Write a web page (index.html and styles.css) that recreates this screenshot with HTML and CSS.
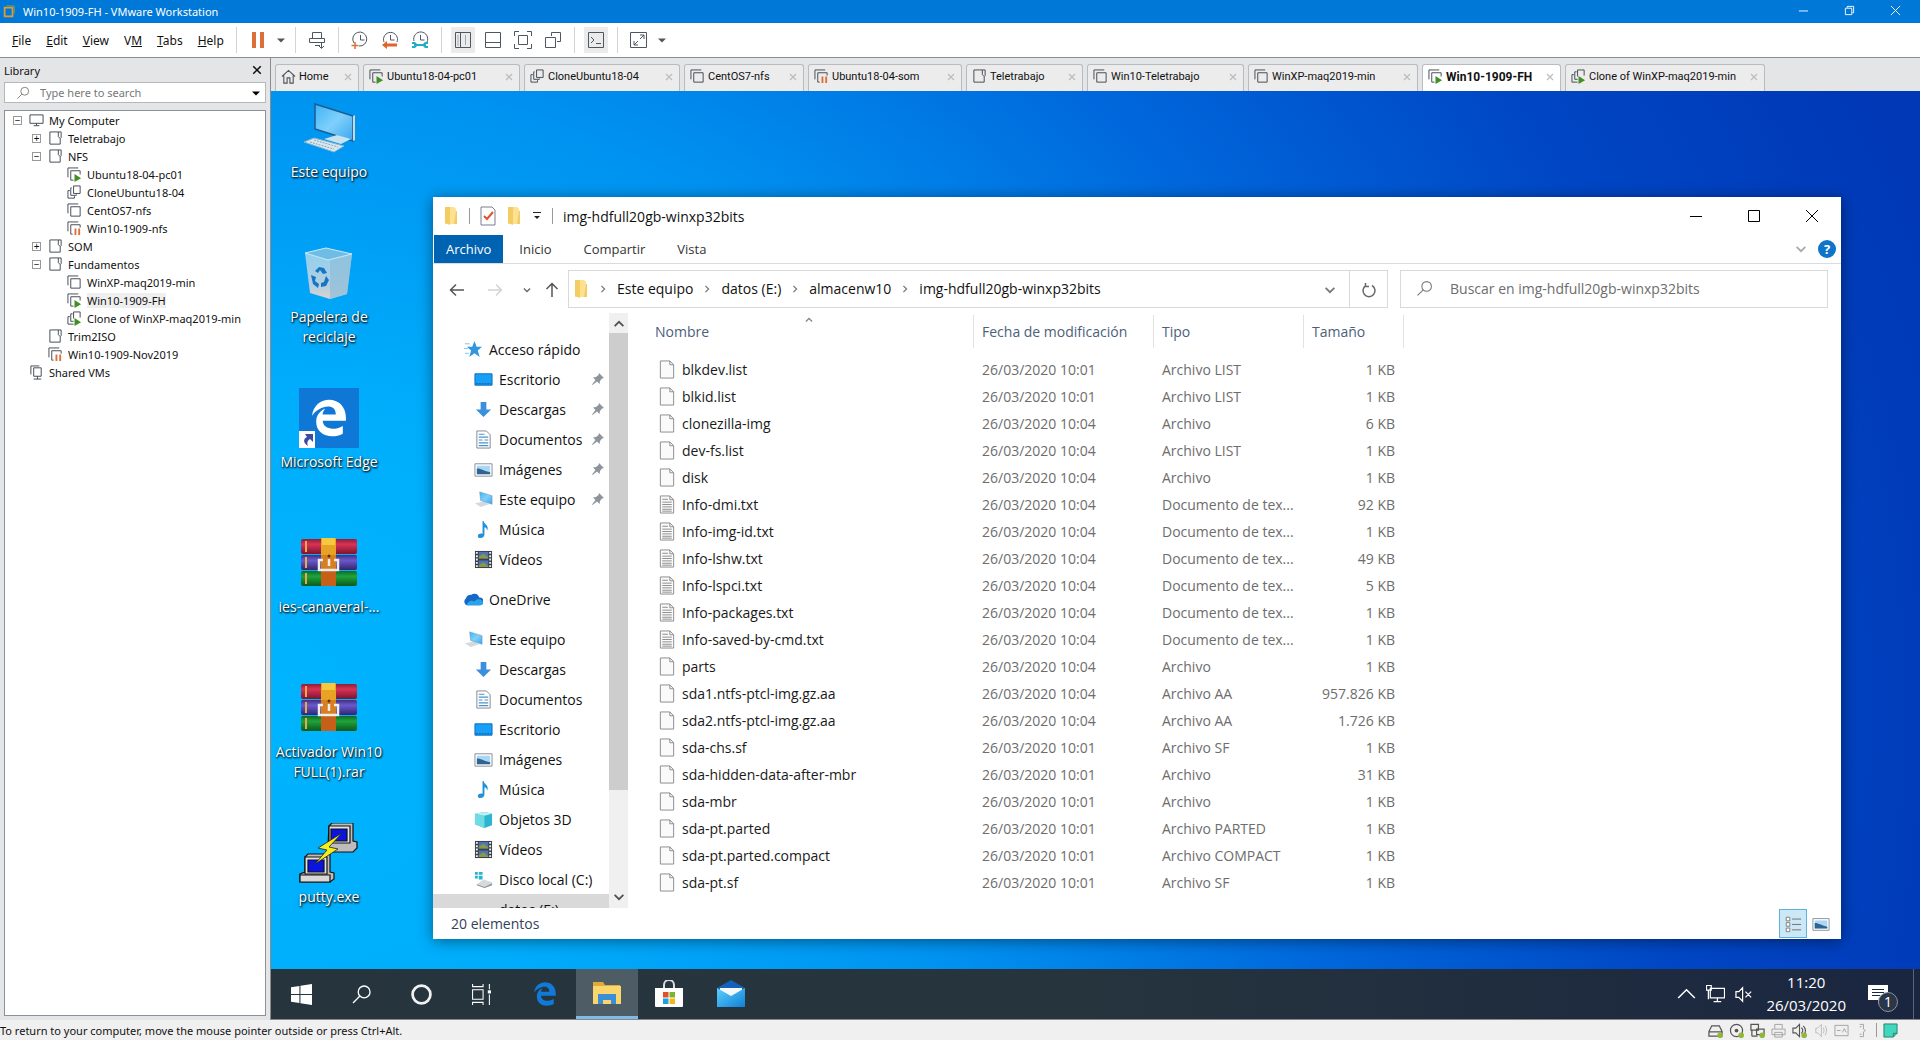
FILE: index.html
```html
<!DOCTYPE html>
<html lang="es">
<head>
<meta charset="UTF-8">
<meta name="viewport" content="width=device-width, initial-scale=1.0">
<title>Win10-1909-FH - VMware Workstation</title>
<link rel="stylesheet" href="styles.css">
</head>
<body>

<!-- Icon library -->
<svg class="defs" aria-hidden="true">
    <defs>
        <linearGradient id="g-screen" x1="0" y1="0" x2="1" y2="1"><stop offset="0" stop-color="#3db4f5"/><stop offset=".5" stop-color="#7fd0fb"/><stop offset="1" stop-color="#3aa6f0"/></linearGradient>
        <linearGradient id="g-bin" x1="0" y1="0" x2="0" y2="1"><stop offset="0" stop-color="#8fd0f0"/><stop offset=".7" stop-color="#b5cfdf"/><stop offset="1" stop-color="#d9d3d0"/></linearGradient>
        <linearGradient id="g-red" x1="0" y1="0" x2="0" y2="1"><stop offset="0" stop-color="#8d1e38"/><stop offset=".35" stop-color="#d93355"/><stop offset="1" stop-color="#7c1430"/></linearGradient>
        <linearGradient id="g-blue" x1="0" y1="0" x2="0" y2="1"><stop offset="0" stop-color="#40307f"/><stop offset=".35" stop-color="#6a5acd"/><stop offset="1" stop-color="#33246e"/></linearGradient>
        <linearGradient id="g-green" x1="0" y1="0" x2="0" y2="1"><stop offset="0" stop-color="#0c6a26"/><stop offset=".35" stop-color="#22a33c"/><stop offset="1" stop-color="#085a1c"/></linearGradient>
        <linearGradient id="g-mail" x1="0" y1="0" x2="1" y2="1"><stop offset="0" stop-color="#5fd0fa"/><stop offset="1" stop-color="#0f80d8"/></linearGradient>
    </defs>
    <symbol id="i-vm" viewBox="0 0 16 16"><path d="M1 11V1h11M4 4h10v10H4z" fill="none" stroke="#3f4650"/></symbol>
    <symbol id="i-vm-run" viewBox="0 0 16 16"><path d="M1 11V1h11M7 14H4V4h10v4" fill="none" stroke="#3f4650"/><path d="M8 7.500l7 4.500-7 4z" fill="#3e9122"/></symbol>
    <symbol id="i-vm-pause" viewBox="0 0 16 16"><path d="M1 11V1h11M6 14H4V4h10v3" fill="none" stroke="#3f4650"/><path d="M8 8h2v7H8zM12 8h2v7h-2z" fill="#dd6f3a"/></symbol>
    <symbol id="i-clone" viewBox="0 0 16 16"><path d="M3 6H1v8h7v-2M5 3H4v8h6v-1M7 1h7v8H7z" fill="none" stroke="#3f4650"/></symbol>
    <symbol id="i-clone-run" viewBox="0 0 16 16"><path d="M3 6H1v8h6M6 3H4v8h3M14 7V1H7v7" fill="none" stroke="#3f4650"/><path d="M8 7.500l7 4.500-7 4z" fill="#3e9122"/></symbol>
    <symbol id="i-folder-vm" viewBox="0 0 16 16"><path d="M11 1H2v13h11V8M11 1h3v6l-1 1-2-2z" fill="none" stroke="#3f4650"/></symbol>
    <symbol id="i-monitor" viewBox="0 0 16 16"><path d="M1 2h14v9H1zM5 13.500h6M8 11v2" fill="none" stroke="#3f4650"/></symbol>
    <symbol id="i-shared" viewBox="0 0 16 16"><path d="M2 10V1h9M5 3h8v9H5zM5 15h8M9 12v3" fill="none" stroke="#3f4650"/></symbol>
    <symbol id="i-home" viewBox="0 0 16 16"><path d="M1 8l7-6.500L15 8M3 7v8h3.500V9.500h3V15H13V7" fill="none" stroke="#4f5660" stroke-width="1.200"/></symbol>
    <symbol id="i-search" viewBox="0 0 16 16"><circle cx="10" cy="6" r="4.500" fill="none" stroke="currentColor"/><path d="M6.800 9.200L1.500 14.500" stroke="currentColor"/></symbol>
    <symbol id="i-close" viewBox="0 0 16 16"><path d="M2 2l12 12M14 2L2 14" fill="none" stroke="currentColor" stroke-width="2.500"/></symbol>
    <symbol id="i-chev" viewBox="0 0 16 16"><path d="M3 5.500l5 5 5-5" fill="none" stroke="currentColor" stroke-width="2"/></symbol>
    <symbol id="i-caret" viewBox="0 0 10 10"><path d="M0 3h10L5 8z" fill="currentColor"/></symbol>
    <symbol id="i-folder" viewBox="0 0 16 20"><path d="M2 1h9l2 2v15H2z" fill="#fbe190"/><path d="M2 1h5v18l-5-2z" fill="#f3cc63"/><path d="M13 5h1v13h-3z" fill="#f3cc63"/></symbol>
    <symbol id="i-file" viewBox="0 0 16 20"><path d="M1 1h10l4 4v14H1z" fill="#fafafa" stroke="#8a8a8a"/><path d="M11 1v4h4" fill="none" stroke="#8a8a8a"/></symbol>
    <symbol id="i-text" viewBox="0 0 16 20"><path d="M1 1h10l4 4v14H1z" fill="#fafafa" stroke="#8a8a8a"/><path d="M11 1v4h4M3 4.500h6M3 7.500h10M3 10h10M3 12.500h10M3 15h10M3 17h10" fill="none" stroke="#8a8a8a"/></symbol>
    <symbol id="i-star" viewBox="0 0 20 20"><path d="M11 1l2.300 6H19l-4.500 4 2 7-5.500-4-5.500 4 2-7L3 7h5.700z" fill="#3296dc"/><path d="M1 4h5M0 9h4M1 14h4" stroke="#7cc0ee"/></symbol>
    <symbol id="i-desk" viewBox="0 0 20 20"><path d="M1 4h18v12H1z" fill="#18a0f8" stroke="#0a6ab8"/><path d="M2 14.500h16" stroke="#0a5ca0" stroke-dasharray="2 1"/></symbol>
    <symbol id="i-down" viewBox="0 0 20 20"><path d="M7 2h6v8h5l-8 8-8-8h5z" fill="#3c8fdd"/></symbol>
    <symbol id="i-doc" viewBox="0 0 20 20"><path d="M3 1h10l4 4v14H3z" fill="#fff" stroke="#808790"/><path d="M5 4.500h6M5 7.500h10M5 10.500h4M11 10.500h4M5 13.500h10M5 16.500h10" stroke="#4c93cc" stroke-width="1.200"/></symbol>
    <symbol id="i-img" viewBox="0 0 20 20"><path d="M1 4h18v13H1z" fill="#fff" stroke="#868c94"/><path d="M3 6h14v9H3z" fill="#a9d7f6"/><path d="M3 9c5 0 8 3 14 4v2H3z" fill="#2e648f"/></symbol>
    <symbol id="i-pc" viewBox="0 0 20 20"><path d="M1 14l9-2 6 3-9 3z" fill="#d3d9dd"/><path d="M6 2l13 4v9L7 11z" fill="url(#g-screen)" stroke="#6c98b8" stroke-width=".6"/></symbol>
    <symbol id="i-music" viewBox="0 0 20 20"><path d="M10 1c1 4 6 4 4 10-1-3-2-3-3-3v7c0 5-7 5-7 2 0-2.500 3-3.500 5-2.500V1z" fill="#2390da"/></symbol>
    <symbol id="i-video" viewBox="0 0 20 20"><path d="M1 1h18v18H1z" fill="#3c3c44"/><path d="M5 2h10v7H5z" fill="#4a74c0"/><path d="M5 11h10v7H5z" fill="#4a74c0"/><path d="M5 7l5-3 5 4v1H5zM5 16l5-3 5 4v1H5z" fill="#8a9a3c"/><path d="M3 2v17M17 2v17" stroke="#eee" stroke-width="2" stroke-dasharray="2 1.500"/></symbol>
    <symbol id="i-cloud" viewBox="0 0 20 20"><path d="M3 16a4 4 0 0 1-1-7 5 5 0 0 1 6-4 5 5 0 0 1 8 3 4 4 0 0 1 1 8z" fill="#1568c4"/><path d="M3 16c0-4 5-6 8-4 3-4 9-2 9 1 0 2-1 3-3 3z" fill="#2aa3ea"/></symbol>
    <symbol id="i-cube" viewBox="0 0 20 20"><path d="M1 4l10-2 8 2v12l-8 3-10-4z" fill="#2bb5cf"/><path d="M1 4l10 2v13L1 15z" fill="#6fdbe3"/><path d="M1 4l10-2 8 2-8 2z" fill="#b8f2f4"/></symbol>
    <symbol id="i-disk" viewBox="0 0 20 20"><path d="M3 15l7-5 9 3v3l-8 3-8-3z" fill="#d7dadd"/><path d="M3 15l8 3 8-4v2l-8 3-8-3z" fill="#8d969c"/><path d="M1 2h3v3H1zM5 2h4v3H5zM1 6h3v3H1zM5 6h4v4H5z" fill="#27b5cc"/></symbol>
    <symbol id="i-pin" viewBox="0 0 14 14"><path d="M8 1l5 5-2 .5-2 2.500-.5 3L6 9.500 1.500 13 1 12.500 4.500 8 2 5.500 5 5l2.500-2z" fill="#8d949b"/></symbol>
    <symbol id="i-edge" viewBox="0 0 24 24"><path d="M2.740 10.810C3.830-1.360 22.500-1.360 21.200 13.560H8.610c0 4.290 5.810 5.650 10.930 2.750v4.220C13.250 23.880 5 21.430 5 14.090c0-5.510 4.970-7.280 4.970-7.280S8.580 8.580 8.540 10.050h7.160c0-7.120-9.800-4.480-12.960.76z" fill="currentColor"/></symbol>
    <symbol id="i-rar" viewBox="0 0 60 60"><rect x="2" y="6" width="56" height="15" rx="2" fill="url(#g-red)"/><rect x="2" y="22" width="56" height="15" rx="2" fill="url(#g-blue)"/><rect x="2" y="38" width="56" height="15" rx="2" fill="url(#g-green)"/><path d="M7 8v11M7 24v11M7 40v11" stroke="#e9a94a" stroke-width="2"/><path d="M22 5h15v17H22z" fill="#e8a325"/><path d="M23 5h13v7H23z" fill="#f6c83f"/><path d="M22 22h15v16H22z" fill="#d8801f"/><path d="M22 38h15v15H22z" fill="#c65f18"/><circle cx="30" cy="23" r="1.500" fill="#5d3110"/><path d="M24 27h-4v10h19V27h-4M30 26v7" fill="none" stroke="#eee" stroke-width="2.500"/></symbol>
</svg>

<header class="titlebar">
    <svg class="app-logo" viewBox="0 0 16 16"><path d="M3 3h9v10H3z" fill="none" stroke="#e69a2e" stroke-width="2"/><path d="M5 1h9v9" fill="none" stroke="#8aa04a"/></svg>
    <h1>Win10-1909-FH - VMware Workstation</h1>
    <div class="window-buttons">
        <button aria-label="Minimize"><svg viewBox="0 0 12 12"><path d="M1 6.500h10" stroke="#fff"/></svg></button>
        <button aria-label="Restore"><svg viewBox="0 0 12 12"><path d="M1.500 3.500h7v7h-7zM3.500 3V1.500h7v7H9" fill="none" stroke="#fff"/></svg></button>
        <button aria-label="Close"><svg viewBox="0 0 12 12"><path d="M1 1l10 10M11 1L1 11" stroke="#fff"/></svg></button>
    </div>
</header>

<nav class="menubar">
    <div class="menus">
        <button><u>F</u>ile</button>
        <button><u>E</u>dit</button>
        <button><u>V</u>iew</button>
        <button>V<u>M</u></button>
        <button><u>T</u>abs</button>
        <button><u>H</u>elp</button>
    </div>
    <div class="tools">
        <button class="tool" aria-label="Suspend"><svg viewBox="0 0 20 20"><path d="M4 2h4v16H4zM12 2h4v16h-4z" fill="#dd6f3a"/></svg></button>
        <button class="tool small" aria-label="Power menu"><svg viewBox="0 0 10 10"><use href="#i-caret"/></svg></button>
    </div>
    <div class="tools">
        <button class="tool" aria-label="Send Ctrl+Alt+Del"><svg viewBox="0 0 20 20"><path d="M5.500 2.500h9v6h-9zM2.500 8.500h15v4h-15zM8 15.500h5M14.500 12v6M12 16l2.500 2.500L17 16" fill="none" stroke="#4f5660"/></svg></button>
    </div>
    <div class="tools">
        <button class="tool" aria-label="Take snapshot"><svg viewBox="0 0 20 20"><path d="M4 13a7 7 0 1 1 5 3M10.500 5v5h4" fill="none" stroke="#4f5660"/><path d="M5 12v7M1.500 15.500h7" stroke="#dd6f3a" stroke-width="1.500"/></svg></button>
        <button class="tool" aria-label="Revert snapshot"><svg viewBox="0 0 20 20"><path d="M4 12a7 7 0 1 1 13 0M10.500 5v5h4" fill="none" stroke="#4f5660"/><path d="M2 15l5-4v2.500h10v3H7V19z" fill="#e2642a"/></svg></button>
        <button class="tool" aria-label="Manage snapshots"><svg viewBox="0 0 20 20"><path d="M4 11a7 7 0 1 1 13 1M10.500 5v5h4" fill="none" stroke="#4f5660"/><path d="M2 12h3l2 2h6l2-2h3v2h-2v2h2v2h-3l-2-2H7l-2 2H2v-2h2v-2H2z" fill="#1fb0c6"/></svg></button>
    </div>
    <div class="tools">
        <button class="tool on" aria-label="Show library"><svg viewBox="0 0 20 20"><path d="M2.500 2.500h15v15h-15zM7.500 3v14" fill="none" stroke="#4f5660"/><path d="M5 5v11M12.500 5v10" fill="none" stroke="#a5a9ae"/></svg></button>
        <button class="tool" aria-label="Thumbnail bar"><svg viewBox="0 0 20 20"><path d="M2.500 2.500h15v15h-15zM3 12.500h14" fill="none" stroke="#4f5660"/></svg></button>
        <button class="tool" aria-label="Full screen"><svg viewBox="0 0 20 20"><path d="M5.500 5.500h9v9h-9zM1.500 6V1.500H6M14 1.500h4.500V6M18.500 14v4.500H14M6 18.500H1.500V14" fill="none" stroke="#4f5660"/></svg></button>
        <button class="tool" aria-label="Unity"><svg viewBox="0 0 20 20"><path d="M8.500 6V2.500h9v9H14M2.500 7.500h10v10h-10z" fill="none" stroke="#4f5660"/></svg></button>
    </div>
    <div class="tools">
        <button class="tool on" aria-label="Console view"><svg viewBox="0 0 20 20"><path d="M2.500 2.500h15v15h-15zM5 7l3 3-3 3M10 13.500h5" fill="none" stroke="#4f5660"/></svg></button>
    </div>
    <div class="tools">
        <button class="tool" aria-label="Stretch guest"><svg viewBox="0 0 20 20"><path d="M1.500 2.500h16v15h-16zM11 9l4-4M11 5h4v4M9 11l-4 4M5 11v4h4" fill="none" stroke="#4f5660"/></svg></button>
        <button class="tool small" aria-label="Stretch menu"><svg viewBox="0 0 10 10"><use href="#i-caret"/></svg></button>
    </div>
</nav>

<div class="workspace">
    <aside class="library">
        <div class="library-head">
            <h2>Library</h2>
            <button aria-label="Close library"><svg viewBox="0 0 16 16"><use href="#i-close"/></svg></button>
        </div>
        <label class="library-search">
            <svg viewBox="0 0 16 16"><use href="#i-search"/></svg>
            <input type="text" placeholder="Type here to search" aria-label="Search library">
            <svg class="caret" viewBox="0 0 10 10"><use href="#i-caret"/></svg>
        </label>
        <ul class="tree">
            <li><button class="toggle" aria-label="Collapse">−</button><svg><use href="#i-monitor"/></svg><span>My Computer</span></li>
            <li class="l1"><button class="toggle" aria-label="Expand">+</button><svg><use href="#i-folder-vm"/></svg><span>Teletrabajo</span></li>
            <li class="l1"><button class="toggle" aria-label="Collapse">−</button><svg><use href="#i-folder-vm"/></svg><span>NFS</span></li>
            <li class="l2 leaf"><svg><use href="#i-vm-run"/></svg><span>Ubuntu18-04-pc01</span></li>
            <li class="l2 leaf"><svg><use href="#i-clone"/></svg><span>CloneUbuntu18-04</span></li>
            <li class="l2 leaf"><svg><use href="#i-vm"/></svg><span>CentOS7-nfs</span></li>
            <li class="l2 leaf"><svg><use href="#i-vm-pause"/></svg><span>Win10-1909-nfs</span></li>
            <li class="l1"><button class="toggle" aria-label="Expand">+</button><svg><use href="#i-folder-vm"/></svg><span>SOM</span></li>
            <li class="l1"><button class="toggle" aria-label="Collapse">−</button><svg><use href="#i-folder-vm"/></svg><span>Fundamentos</span></li>
            <li class="l2 leaf"><svg><use href="#i-vm"/></svg><span>WinXP-maq2019-min</span></li>
            <li class="l2 leaf"><svg><use href="#i-vm-run"/></svg><span class="current">Win10-1909-FH</span></li>
            <li class="l2 leaf"><svg><use href="#i-clone-run"/></svg><span>Clone of WinXP-maq2019-min</span></li>
            <li class="l1 leaf"><svg><use href="#i-folder-vm"/></svg><span>Trim2ISO</span></li>
            <li class="l1 leaf"><svg><use href="#i-vm-pause"/></svg><span>Win10-1909-Nov2019</span></li>
            <li class="leaf"><svg><use href="#i-shared"/></svg><span>Shared VMs</span></li>
        </ul>
    </aside>

    <div class="console">
        <div class="tabs">
            <div class="tab"><svg><use href="#i-home"/></svg><a href="#">Home</a><button aria-label="Close tab"><svg><use href="#i-close"/></svg></button></div>
            <div class="tab"><svg><use href="#i-vm-run"/></svg><a href="#">Ubuntu18-04-pc01</a><button aria-label="Close tab"><svg><use href="#i-close"/></svg></button></div>
            <div class="tab"><svg><use href="#i-clone"/></svg><a href="#">CloneUbuntu18-04</a><button aria-label="Close tab"><svg><use href="#i-close"/></svg></button></div>
            <div class="tab"><svg><use href="#i-vm"/></svg><a href="#">CentOS7-nfs</a><button aria-label="Close tab"><svg><use href="#i-close"/></svg></button></div>
            <div class="tab"><svg><use href="#i-vm-pause"/></svg><a href="#">Ubuntu18-04-som</a><button aria-label="Close tab"><svg><use href="#i-close"/></svg></button></div>
            <div class="tab"><svg><use href="#i-folder-vm"/></svg><a href="#">Teletrabajo</a><button aria-label="Close tab"><svg><use href="#i-close"/></svg></button></div>
            <div class="tab"><svg><use href="#i-vm"/></svg><a href="#">Win10-Teletrabajo</a><button aria-label="Close tab"><svg><use href="#i-close"/></svg></button></div>
            <div class="tab"><svg><use href="#i-vm"/></svg><a href="#">WinXP-maq2019-min</a><button aria-label="Close tab"><svg><use href="#i-close"/></svg></button></div>
            <div class="tab active"><svg><use href="#i-vm-run"/></svg><a href="#">Win10-1909-FH</a><button aria-label="Close tab"><svg><use href="#i-close"/></svg></button></div>
            <div class="tab"><svg><use href="#i-clone-run"/></svg><a href="#">Clone of WinXP-maq2019-min</a><button aria-label="Close tab"><svg><use href="#i-close"/></svg></button></div>
        </div>

        <div class="guest">
            <main class="desktop">
                <div class="shortcuts">
                    <a href="#" class="shortcut">
                        <svg viewBox="0 0 60 60"><path d="M16 6l38 12v25L16 31z" fill="url(#g-screen)" stroke="#1d5c90" stroke-width="1.500"/><path d="M54 18l2-1v25l-2 1z" fill="#c8d8e0"/><path d="M25 41l13-4 14 4-10 5z" fill="#c9e2f2"/><path d="M5 44l10-4 30 8-10 6z" fill="#d9e8f0" stroke="#8fb4ca"/><path d="M11 44l24 7M15 42l24 7" stroke="#8aa6b6" stroke-dasharray="2 1"/></svg>
                        <span>Este equipo</span>
                    </a>
                    <a href="#" class="shortcut">
                        <svg viewBox="0 0 60 60"><path d="M6 10l5 40 20 6 17-5 5-40-24 6z" fill="url(#g-bin)"/><path d="M31 17l22-6-5 40-17 5z" fill="#8fbdd8" opacity=".7"/><path d="M6 10l21-5 26 6-24 6z" fill="#6fbde4" stroke="#cdeaf8"/><path d="M16 28l4-4 5 1 3 5-4 1-3-4-2 3zM27 33l3 4-3 6-5 1v-4l3-1zM12 32l5 2-1 4 4 3-1 4-5-4z" fill="#1576c6"/></svg>
                        <span>Papelera de reciclaje</span>
                    </a>
                    <a href="#" class="shortcut">
                        <svg viewBox="0 0 60 60"><path d="M0 0h60v60H0z" fill="#0f78d7"/><svg x="8" y="7" width="44" height="46" color="#fff"><use href="#i-edge"/></svg><path d="M0 43h16v17H0z" fill="#fff"/><path d="M6 46h8v8l-3-3c-3 2-3 4-2 7-5-3-5-7-1-9z" fill="#3b4da0"/></svg>
                        <span>Microsoft Edge</span>
                    </a>
                    <a href="#" class="shortcut">
                        <svg viewBox="0 0 60 60"><use href="#i-rar"/></svg>
                        <span>ies-canaveral-...</span>
                    </a>
                    <a href="#" class="shortcut">
                        <svg viewBox="0 0 60 60"><use href="#i-rar"/></svg>
                        <span>Activador Win10 FULL(1).rar</span>
                    </a>
                    <a href="#" class="shortcut">
                        <svg viewBox="0 0 60 60"><g stroke="#111" stroke-width="1.200"><path d="M30 3l3-3h21v18l4 1v6l-4 4H29v-6z" fill="#bdbdbd"/><path d="M30 3h21v17H30z" fill="#e2e2e2"/><path d="M32 6h16v12H32z" fill="#0a14e0"/><path d="M6 34l3-3h22v18l4 1v6l-4 3H1v-8l5-2z" fill="#bdbdbd"/><path d="M6 34h22v17H6z" fill="#e2e2e2"/><path d="M9 37h16v12H9z" fill="#0a14e0"/><path d="M1 52h30v7H1z" fill="#d8d8d8"/></g><path d="M43 10L19 25l9 2-12 14 23-15-9-2z" fill="#f6ee1c" stroke="#222" stroke-width=".8"/></svg>
                        <span>putty.exe</span>
                    </a>
                </div>

                <section class="explorer">
                    <div class="ex-title">
                        <svg class="folder"><use href="#i-folder"/></svg>
                        <i class="bar"></i>
                        <svg class="check" viewBox="0 0 16 20"><path d="M1 1h11l3 3v15H1z" fill="#fff" stroke="#7b7f92"/><path d="M4 10l3 3 6-7" fill="none" stroke="#e0532c" stroke-width="2"/></svg>
                        <svg class="folder"><use href="#i-folder"/></svg>
                        <svg class="qa-menu" viewBox="0 0 10 10"><path d="M1 1.500h8" stroke="#222"/><path d="M2 5h6L5 8z" fill="#222"/></svg>
                        <i class="bar"></i>
                        <h2>img-hdfull20gb-winxp32bits</h2>
                        <div class="ex-buttons">
                            <button aria-label="Minimizar"><svg viewBox="0 0 12 12"><path d="M0 6.500h12" stroke="#000"/></svg></button>
                            <button aria-label="Maximizar"><svg viewBox="0 0 12 12"><path d="M.5.500h11v11H.5z" fill="none" stroke="#000"/></svg></button>
                            <button aria-label="Cerrar"><svg viewBox="0 0 12 12"><path d="M0 0l12 12M12 0L0 12" stroke="#000"/></svg></button>
                        </div>
                    </div>
                    <div class="ribbon">
                        <button class="file">Archivo</button>
                        <button>Inicio</button>
                        <button>Compartir</button>
                        <button>Vista</button>
                        <svg viewBox="0 0 16 16"><use href="#i-chev"/></svg>
                        <button class="help" aria-label="Ayuda">?</button>
                    </div>
                    <div class="address-row">
                        <button class="nav-btn" aria-label="Atrás"><svg viewBox="0 0 16 16"><path d="M15 8H1.500M7 2.500L1.500 8 7 13.500" fill="none" stroke="#555" stroke-width="1.500"/></svg></button>
                        <button class="nav-btn" aria-label="Adelante"><svg viewBox="0 0 16 16"><path d="M1 8h13.500M9 2.500L14.500 8 9 13.500" fill="none" stroke="#d4d4d4" stroke-width="1.500"/></svg></button>
                        <button class="nav-btn mini" aria-label="Recientes"><svg viewBox="0 0 16 16"><use href="#i-chev"/></svg></button>
                        <button class="nav-btn mini up" aria-label="Subir"><svg viewBox="0 0 16 16"><path d="M8 15V1.500M2.500 7L8 1.500 13.500 7" fill="none" stroke="#555" stroke-width="1.500"/></svg></button>
                        <div class="crumbs">
                            <svg class="folder"><use href="#i-folder"/></svg>
                            <svg class="sep"><use href="#i-chev"/></svg>
                            <a href="#">Este equipo</a>
                            <svg class="sep"><use href="#i-chev"/></svg>
                            <a href="#">datos (E:)</a>
                            <svg class="sep"><use href="#i-chev"/></svg>
                            <a href="#">almacenw10</a>
                            <svg class="sep"><use href="#i-chev"/></svg>
                            <a href="#">img-hdfull20gb-winxp32bits</a>
                            <button class="drop" aria-label="Historial"><svg viewBox="0 0 16 16"><use href="#i-chev"/></svg></button>
                            <button class="refresh" aria-label="Actualizar"><svg viewBox="0 0 16 16"><path d="M11 3.500A6 6 0 1 1 5 3.500M4.500 1v3.500H8" fill="none" stroke="#666" stroke-width="1.500"/></svg></button>
                        </div>
                        <label class="ex-search">
                            <svg viewBox="0 0 16 16"><use href="#i-search"/></svg>
                            <input type="text" placeholder="Buscar en img-hdfull20gb-winxp32bits" aria-label="Buscar">
                        </label>
                    </div>
                    <div class="ex-body">
                        <nav class="places">
                            <a href="#" class="root"><svg><use href="#i-star"/></svg>Acceso rápido</a>
                            <a href="#"><svg><use href="#i-desk"/></svg>Escritorio<svg class="pin"><use href="#i-pin"/></svg></a>
                            <a href="#"><svg><use href="#i-down"/></svg>Descargas<svg class="pin"><use href="#i-pin"/></svg></a>
                            <a href="#"><svg><use href="#i-doc"/></svg>Documentos<svg class="pin"><use href="#i-pin"/></svg></a>
                            <a href="#"><svg><use href="#i-img"/></svg>Imágenes<svg class="pin"><use href="#i-pin"/></svg></a>
                            <a href="#"><svg><use href="#i-pc"/></svg>Este equipo<svg class="pin"><use href="#i-pin"/></svg></a>
                            <a href="#"><svg><use href="#i-music"/></svg>Música</a>
                            <a href="#"><svg><use href="#i-video"/></svg>Vídeos</a>
                            <a href="#" class="root gap"><svg><use href="#i-cloud"/></svg>OneDrive</a>
                            <a href="#" class="root gap"><svg><use href="#i-pc"/></svg>Este equipo</a>
                            <a href="#"><svg><use href="#i-down"/></svg>Descargas</a>
                            <a href="#"><svg><use href="#i-doc"/></svg>Documentos</a>
                            <a href="#"><svg><use href="#i-desk"/></svg>Escritorio</a>
                            <a href="#"><svg><use href="#i-img"/></svg>Imágenes</a>
                            <a href="#"><svg><use href="#i-music"/></svg>Música</a>
                            <a href="#"><svg><use href="#i-cube"/></svg>Objetos 3D</a>
                            <a href="#"><svg><use href="#i-video"/></svg>Vídeos</a>
                            <a href="#"><svg><use href="#i-disk"/></svg>Disco local (C:)</a>
                            <a href="#" class="selected"><svg></svg>datos (E:)</a>
                        </nav>
                        <div class="scrollbar">
                            <svg class="flip" viewBox="0 0 16 16"><use href="#i-chev"/></svg>
                            <div class="track"><div class="thumb"></div></div>
                            <svg viewBox="0 0 16 16"><use href="#i-chev"/></svg>
                        </div>
                        <div class="files">
                            <table>
                                <thead>
                                    <tr><th class="c-name"><div>Nombre<svg class="sort" viewBox="0 0 16 16"><use href="#i-chev"/></svg></div></th><th class="c-date"><div>Fecha de modificación</div></th><th class="c-type"><div>Tipo</div></th><th class="c-size"><div>Tamaño</div></th></tr>
                                </thead>
                                <tbody>
                                    <tr><td><svg><use href="#i-file"/></svg>blkdev.list</td><td>26/03/2020 10:01</td><td>Archivo LIST</td><td>1 KB</td></tr>
                                    <tr><td><svg><use href="#i-file"/></svg>blkid.list</td><td>26/03/2020 10:01</td><td>Archivo LIST</td><td>1 KB</td></tr>
                                    <tr><td><svg><use href="#i-file"/></svg>clonezilla-img</td><td>26/03/2020 10:04</td><td>Archivo</td><td>6 KB</td></tr>
                                    <tr><td><svg><use href="#i-file"/></svg>dev-fs.list</td><td>26/03/2020 10:04</td><td>Archivo LIST</td><td>1 KB</td></tr>
                                    <tr><td><svg><use href="#i-file"/></svg>disk</td><td>26/03/2020 10:04</td><td>Archivo</td><td>1 KB</td></tr>
                                    <tr><td><svg><use href="#i-text"/></svg>Info-dmi.txt</td><td>26/03/2020 10:04</td><td>Documento de tex...</td><td>92 KB</td></tr>
                                    <tr><td><svg><use href="#i-text"/></svg>Info-img-id.txt</td><td>26/03/2020 10:04</td><td>Documento de tex...</td><td>1 KB</td></tr>
                                    <tr><td><svg><use href="#i-text"/></svg>Info-lshw.txt</td><td>26/03/2020 10:04</td><td>Documento de tex...</td><td>49 KB</td></tr>
                                    <tr><td><svg><use href="#i-text"/></svg>Info-lspci.txt</td><td>26/03/2020 10:04</td><td>Documento de tex...</td><td>5 KB</td></tr>
                                    <tr><td><svg><use href="#i-text"/></svg>Info-packages.txt</td><td>26/03/2020 10:04</td><td>Documento de tex...</td><td>1 KB</td></tr>
                                    <tr><td><svg><use href="#i-text"/></svg>Info-saved-by-cmd.txt</td><td>26/03/2020 10:04</td><td>Documento de tex...</td><td>1 KB</td></tr>
                                    <tr><td><svg><use href="#i-file"/></svg>parts</td><td>26/03/2020 10:04</td><td>Archivo</td><td>1 KB</td></tr>
                                    <tr><td><svg><use href="#i-file"/></svg>sda1.ntfs-ptcl-img.gz.aa</td><td>26/03/2020 10:04</td><td>Archivo AA</td><td>957.826 KB</td></tr>
                                    <tr><td><svg><use href="#i-file"/></svg>sda2.ntfs-ptcl-img.gz.aa</td><td>26/03/2020 10:04</td><td>Archivo AA</td><td>1.726 KB</td></tr>
                                    <tr><td><svg><use href="#i-file"/></svg>sda-chs.sf</td><td>26/03/2020 10:01</td><td>Archivo SF</td><td>1 KB</td></tr>
                                    <tr><td><svg><use href="#i-file"/></svg>sda-hidden-data-after-mbr</td><td>26/03/2020 10:01</td><td>Archivo</td><td>31 KB</td></tr>
                                    <tr><td><svg><use href="#i-file"/></svg>sda-mbr</td><td>26/03/2020 10:01</td><td>Archivo</td><td>1 KB</td></tr>
                                    <tr><td><svg><use href="#i-file"/></svg>sda-pt.parted</td><td>26/03/2020 10:01</td><td>Archivo PARTED</td><td>1 KB</td></tr>
                                    <tr><td><svg><use href="#i-file"/></svg>sda-pt.parted.compact</td><td>26/03/2020 10:01</td><td>Archivo COMPACT</td><td>1 KB</td></tr>
                                    <tr><td><svg><use href="#i-file"/></svg>sda-pt.sf</td><td>26/03/2020 10:01</td><td>Archivo SF</td><td>1 KB</td></tr>
                                </tbody>
                            </table>
                        </div>
                    </div>
                    <div class="ex-status">
                        <span>20 elementos</span>
                        <button class="view on" aria-label="Detalles"><svg viewBox="0 0 20 20"><path d="M2.500 2.500h4v4h-4zM2.500 8.500h4v4h-4zM2.500 14.500h4v4h-4z" fill="#fff" stroke="#777"/><path d="M9 4.500h10M9 10.500h10M9 16.500h10" stroke="#666"/></svg></button>
                        <button class="view" aria-label="Iconos grandes"><svg viewBox="0 0 20 20"><use href="#i-img"/></svg></button>
                    </div>
                </section>
            </main>

            <footer class="taskbar">
                <button aria-label="Inicio"><svg viewBox="0 0 20 20"><path d="M0 3l8-1.200v7.700H0zM9 1.700L20 0v9.500H9zM0 10.500h8v7.700L0 17zM9 10.500h11V20L9 18.300z" fill="#fff"/></svg></button>
                <button aria-label="Buscar"><svg viewBox="0 0 16 16" color="#fff"><use href="#i-search"/></svg></button>
                <button aria-label="Cortana"><svg viewBox="0 0 20 20"><circle cx="10" cy="10" r="8.500" fill="none" stroke="#f2f2f2" stroke-width="2.600"/></svg></button>
                <button aria-label="Vista de tareas"><svg viewBox="0 0 20 20"><path d="M1.500 5.500h10v9h-10zM1.500 0v2.500h10V0M1.500 20v-2.500h10V20M17.500 0v5M17.500 10v10" fill="none" stroke="#fff"/><path d="M16 6h3v3h-3z" fill="#fff"/></svg></button>
                <div class="apps">
                    <button aria-label="Edge"><svg viewBox="0 0 24 24" color="#0f7ad8"><use href="#i-edge"/></svg></button>
                    <button class="running" aria-label="Explorador de archivos"><svg viewBox="0 0 28 28"><path d="M0 3h10l2 3h15v6H0z" fill="#e5a83a"/><path d="M0 7h28v18H0z" fill="#fbd66c"/><path d="M5 25V15h18v10h-5v-4h-8v4z" fill="#3b8fd8"/></svg></button>
                    <button aria-label="Tienda"><svg viewBox="0 0 28 28"><path d="M9 9V5a5 5 0 0 1 10 0v4" fill="none" stroke="#ddd" stroke-width="2"/><path d="M0 8h28v18a1 1 0 0 1-1 1H1a1 1 0 0 1-1-1z" fill="#fff"/><path d="M8 12h5.500v5.500H8z" fill="#e0512b"/><path d="M14.500 12H20v5.500h-5.500z" fill="#7cb52d"/><path d="M8 18.500h5.500V24H8z" fill="#1ba0e6"/><path d="M14.500 18.500H20V24h-5.500z" fill="#f7b51a"/></svg></button>
                    <button aria-label="Correo"><svg viewBox="0 0 28 28"><path d="M0 8L14 0l14 8v4H0z" fill="#1560b8"/><path d="M3 8h22v8H3z" fill="#f4f8fb"/><path d="M0 8l14 8 14-8v19H0z" fill="url(#g-mail)"/></svg></button>
                </div>
                <div class="tray">
                    <svg class="flip" viewBox="0 0 16 16"><path d="M1 5l7 7 7-7" fill="none" stroke="#fff" stroke-width="1.300"/></svg>
                    <svg viewBox="0 0 20 20"><path d="M4.500 3.500h15v10h-15zM12 14v3M8 17.500h8M.5.500h5v5h-5zM2.500 6v9" fill="none" stroke="#fff" stroke-width="1.300"/></svg>
                    <svg viewBox="0 0 20 20"><path d="M1 7h3l4-4v14l-4-4H1zM11 7l6 6M17 7l-6 6" fill="none" stroke="#fff" stroke-width="1.300"/></svg>
                    <div class="clock"><span>11:20</span><span>26/03/2020</span></div>
                    <div class="notes">
                        <svg viewBox="0 0 20 20"><path d="M0 1h20v15h-5l-5 4v-4H0z" fill="#fff"/><path d="M4 5.500h12M4 8.500h12M4 11.500h8" stroke="#1a2740"/></svg>
                        <span>1</span>
                    </div>
                </div>
            </footer>
        </div>
    </div>
</div>

<footer class="statusbar">
    <p>To return to your computer, move the mouse pointer outside or press Ctrl+Alt.</p>
    <div class="devices">
        <svg viewBox="0 0 16 16"><path d="M1 9l3-6h8l3 6v5H1zM1 9.500h14" fill="none" stroke="#555" stroke-width="1.300"/><circle cx="13" cy="13" r="3" fill="#8db83a"/></svg>
        <svg viewBox="0 0 16 16"><circle cx="8" cy="8" r="6.500" fill="none" stroke="#555" stroke-width="1.300"/><circle cx="8" cy="8" r="2" fill="#555"/><circle cx="13" cy="13" r="3" fill="#8db83a"/></svg>
        <svg viewBox="0 0 16 16"><path d="M1 1.500h8v6H1zM7 6.500h8v6H7zM2 8v6M2 14h6" fill="none" stroke="#555" stroke-width="1.300"/><circle cx="13" cy="13" r="3" fill="#8db83a"/></svg>
        <svg class="off" viewBox="0 0 16 16"><path d="M4 6V1.500h8V6M1 6.500h14v6H1zM4 10h8v5H4z" fill="none" stroke="#555"/></svg>
        <svg viewBox="0 0 16 16"><path d="M1 5.500h3l4-4v13l-4-4H1zM10 5c2 2 2 4 0 6M12 3c3 3 3 6 1 9" fill="none" stroke="#555" stroke-width="1.200"/><circle cx="13" cy="13" r="3" fill="#8db83a"/></svg>
        <svg class="off" viewBox="0 0 16 16"><path d="M3 5.500h2l4-4v13l-4-4H3zM11 5c1 2 1 4 0 6M13 3c2 3 2 6 0 10" fill="none" stroke="#888"/></svg>
        <svg class="off" viewBox="0 0 16 16"><path d="M1 2.500h14v11H1zM3 8h4M9 10l2-4 2 4" fill="none" stroke="#555"/></svg>
        <svg class="off" viewBox="0 0 16 16"><path d="M5 1.500h4v5l2 1.500-2 1.500v5H5M5 4h2M5 12h2" fill="none" stroke="#555"/></svg>
        <i></i>
        <svg viewBox="0 0 16 16"><path d="M1 1h14v10l-4 4H1z" fill="#3fd8bd" stroke="#26806f"/><path d="M15 11h-4v4" fill="none" stroke="#26806f"/></svg>
    </div>
</footer>

</body>
</html>
```

FILE: styles.css
```css
* {
  box-sizing: border-box;
}
body {
  font-family: 'Noto Sans', 'Open Sans', sans-serif;
  font-size: 11px;
  margin: 0;
  height: 100vh;
  display: flex;
  flex-direction: column;
  background-color: #fff;
  color: #111;
  overflow: hidden;
}
h1, h2, p, ul {
  margin: 0;
  padding: 0;
  font-size: inherit;
  font-weight: normal;
}
button {
  font: inherit;
  color: inherit;
  border: 0;
  padding: 0;
  background: none;
}
a {
  color: inherit;
  text-decoration: none;
}
input {
  font: inherit;
  border: 0;
  padding: 0;
  min-width: 0;
  flex: 1;
  background: none;
}
svg {
  flex: none;
}
.defs {
  position: absolute;
  width: 0;
  height: 0;
}

/* Workstation frame */
.titlebar {
  display: flex;
  align-items: center;
  height: 23px;
  padding-left: 2px;
  background-color: #0078d7;
  color: #fff;
}
.app-logo {
  width: 14px;
  height: 14px;
  margin-right: 7px;
}
.window-buttons {
  display: flex;
  margin-left: auto;
  padding-right: 2px;
}
.window-buttons button {
  width: 46px;
  height: 20px;
}
.window-buttons svg {
  width: 11px;
  height: 11px;
}
.menubar {
  display: flex;
  align-items: center;
  height: 35px;
  border-bottom: 1px solid #8c8c8c;
}
.menus {
  display: flex;
  gap: 15px;
  padding: 0 12px;
}
.menus button {
  font-size: 12px;
}
.tools {
  display: flex;
  align-items: center;
  gap: 6px;
  padding: 0 9px;
  border-left: 1px solid #d4d4d4;
}
.tool {
  display: grid;
  place-items: center;
  width: 24px;
  height: 26px;
  color: #555;
}
.tool svg {
  width: 20px;
  height: 20px;
}
.tool.small {
  width: 10px;
}
.tool.small svg {
  width: 8px;
  height: 8px;
}
.tool.on {
  background-color: #ebebeb;
}
.workspace {
  flex: 1;
  min-height: 0;
  display: flex;
  background-color: #e4e5e7;
}

/* Library */
.library {
  width: 271px;
  flex: none;
  padding: 0 4px 4px;
  display: flex;
  flex-direction: column;
  border-right: 1px solid #8c8c8c;
}
.library-head {
  display: flex;
  align-items: center;
  justify-content: space-between;
  height: 24px;
  padding-right: 4px;
}
.library-head svg {
  display: block;
  width: 10px;
  height: 10px;
}
.library-search {
  display: flex;
  align-items: center;
  height: 21px;
  padding: 0 5px 0 11px;
  margin-bottom: 7px;
  border: 1px solid #b4b7bb;
  background-color: #fff;
  color: #777;
}
.library-search svg {
  width: 14px;
  height: 14px;
  margin-right: 10px;
}
.library-search .caret {
  width: 8px;
  height: 8px;
  margin: 0;
  color: #000;
}
.library-search input::placeholder {
  color: #777;
  opacity: 1;
}
.tree {
  flex: 1;
  padding-left: 8px;
  border: 1px solid #8c9199;
  background-color: #fff;
  list-style: none;
}
.tree li {
  display: flex;
  align-items: center;
  height: 18px;
}
.tree svg {
  width: 15px;
  height: 15px;
  margin: 0 5px 0 7px;
}
.tree .leaf {
  padding-left: 9px;
}
.tree .l1 {
  padding-left: 19px;
}
.tree .l1.leaf {
  padding-left: 28px;
}
.tree .l2.leaf {
  padding-left: 47px;
}
.toggle {
  width: 9px;
  height: 9px;
  border: 1px solid #999;
  font-size: 10px;
  line-height: 6px;
}
.current {
  background-color: #efefef;
}

/* Console tabs */
.console {
  flex: 1;
  min-width: 0;
  display: flex;
  flex-direction: column;
}
.tabs {
  display: grid;
  grid-template-columns: 84px 157px 156px 120px 154px 117px 157px 170px 139px 200px;
  gap: 4px;
  height: 33px;
  padding: 6px 4px 0;
}
.tab {
  display: flex;
  align-items: center;
  min-width: 0;
  padding: 0 6px 3px 5px;
  border: 1px solid #b9bbbe;
  border-bottom: 0;
  border-radius: 3px 3px 0 0;
  background-color: #ececed;
  font-family: Roboto, 'Open Sans', sans-serif;
  white-space: nowrap;
}
.tab svg {
  width: 15px;
  height: 15px;
  margin-right: 3px;
}
.tab button {
  margin-left: auto;
  color: #bdbdbd;
}
.tab button svg {
  display: block;
  width: 8px;
  height: 8px;
  margin: 0;
}
.tab.active {
  background-color: #fff;
  font-size: 12px;
  font-weight: bold;
}

/* Guest screen */
.guest {
  flex: 1;
  min-height: 0;
  display: flex;
  flex-direction: column;
  font-family: 'Open Sans', 'Noto Sans', sans-serif;
  font-size: 14px;
}
.desktop {
  position: relative;
  flex: 1;
  min-height: 0;
  background: radial-gradient(ellipse 1750px 1500px at 0 70%, #00b4ff 0, #00aefc 20%, #0092f0 42%, #0068dc 62%, #0046c4 82%, #0038b6 100%);
}
.shortcuts {
  width: 116px;
  padding-top: 7px;
}
.shortcut {
  display: flex;
  flex-direction: column;
  align-items: center;
  gap: 4px;
  height: 145px;
  color: #fff;
  line-height: 20px;
  text-align: center;
  text-shadow: 1px 1px 2px #000, 0 1px 2px #0008;
}
.shortcut > svg {
  width: 60px;
  height: 60px;
}

/* Explorer window */
.explorer {
  position: absolute;
  inset: 106px 79px 30px 162px;
  display: flex;
  flex-direction: column;
  background-color: #fff;
  box-shadow: 0 2px 14px rgba(0, 0, 0, 0.45);
}
.folder {
  width: 16px;
  height: 20px;
}
.ex-title {
  display: flex;
  align-items: center;
  gap: 10px;
  height: 38px;
  padding-left: 10px;
}
.ex-title .bar {
  width: 1px;
  height: 16px;
  background-color: #999;
}
.ex-title .check {
  width: 16px;
  height: 20px;
}
.ex-title .qa-menu {
  width: 10px;
  height: 10px;
}
.ex-buttons {
  display: flex;
  margin-left: auto;
}
.ex-buttons button {
  width: 58px;
  height: 38px;
}
.ex-buttons svg {
  width: 12px;
  height: 12px;
}
.ribbon {
  display: flex;
  align-items: center;
  height: 29px;
  padding: 0 5px 0 1px;
  border-bottom: 1px solid #dadbdc;
  font-size: 13px;
  color: #333;
}
.ribbon button {
  height: 28px;
  padding: 0 16px;
}
.ribbon .file {
  background-color: #0063b1;
  color: #fff;
  padding: 0 12px;
}
.ribbon svg {
  width: 14px;
  height: 14px;
  margin: 0 10px 0 auto;
  color: #aaa;
}
.ribbon .help {
  width: 18px;
  height: 18px;
  padding: 0;
  border-radius: 50%;
  background-color: #0e74c9;
  color: #fff;
  font-weight: bold;
  line-height: 18px;
}
.address-row {
  display: flex;
  align-items: center;
  height: 49px;
  padding: 0 13px 0 9px;
}
.nav-btn {
  width: 30px;
  height: 30px;
  margin-right: 8px;
  color: #666;
}
.nav-btn svg {
  width: 16px;
  height: 16px;
  vertical-align: middle;
}
.nav-btn.mini {
  width: 18px;
  margin-right: 7px;
}
.nav-btn.mini svg {
  width: 10px;
  height: 10px;
}
.nav-btn.up svg {
  width: 16px;
  height: 16px;
}
.crumbs {
  flex: 1;
  display: flex;
  align-items: center;
  height: 38px;
  padding-left: 4px;
  border: 1px solid #d9d9d9;
}
.crumbs .sep {
  width: 10px;
  height: 10px;
  margin: 0 9px;
  transform: rotate(-90deg);
  color: #777;
}
.crumbs .drop, .crumbs .refresh {
  width: 38px;
  height: 36px;
  color: #777;
}
.crumbs .drop {
  margin-left: auto;
}
.crumbs .refresh {
  border-left: 1px solid #d9d9d9;
}
.crumbs .drop svg {
  width: 14px;
  height: 14px;
  vertical-align: middle;
}
.crumbs .refresh svg {
  width: 16px;
  height: 16px;
  vertical-align: middle;
}
.ex-search {
  width: 428px;
  display: flex;
  align-items: center;
  height: 38px;
  margin-left: 12px;
  padding-left: 15px;
  border: 1px solid #d9d9d9;
  color: #777;
}
.ex-search svg {
  width: 17px;
  height: 17px;
  margin-right: 17px;
}
.ex-search input::placeholder {
  color: #6d6d6d;
  opacity: 1;
}
.ex-body {
  flex: 1;
  min-height: 0;
  display: flex;
}
.places {
  width: 176px;
  padding-top: 21px;
  overflow: hidden;
}
.places a {
  display: flex;
  align-items: center;
  gap: 6px;
  height: 30px;
  padding-left: 41px;
  white-space: nowrap;
}
.places .root {
  padding-left: 31px;
}
.places .gap {
  margin-top: 10px;
}
.places svg {
  width: 19px;
  height: 19px;
}
.places .pin {
  width: 14px;
  height: 14px;
  margin: 0 4px 0 auto;
}
.places .selected {
  background-color: #d9d9d9;
}
.scrollbar {
  display: flex;
  flex-direction: column;
  align-items: center;
  width: 19px;
  padding: 4px 0;
  background-color: #f0f0f0;
  color: #505050;
}
.scrollbar svg {
  width: 14px;
  height: 14px;
}
.track {
  flex: 1;
  align-self: stretch;
  padding: 2px 0 7px;
}
.thumb {
  height: 83%;
  background-color: #cdcdcd;
}
.flip {
  transform: rotate(180deg);
}
.files {
  flex: 1;
  overflow: hidden;
}
.files table {
  width: 776px;
  table-layout: fixed;
  border-collapse: collapse;
}
.files th {
  height: 43px;
  padding: 2px 0 8px;
  text-align: left;
  font-weight: normal;
  color: #4c607a;
}
.files th div {
  position: relative;
  padding-left: 8px;
  line-height: 33px;
  border-right: 1px solid #e2e2e2;
}
.files .c-name {
  width: 346px;
}
.files .c-name div {
  padding-left: 27px;
}
.files .c-date {
  width: 180px;
}
.files .c-type {
  width: 150px;
}
.files .c-size {
  width: 100px;
}
.sort {
  position: absolute;
  top: 0;
  left: 51%;
  width: 10px;
  height: 10px;
  transform: rotate(180deg);
  color: #888;
}
.files td {
  height: 27px;
  padding: 0 9px 0 8px;
  color: #6d6d6d;
  white-space: nowrap;
}
.files td:first-child {
  padding-left: 31px;
  color: #1a1a1a;
}
.files td:last-child {
  text-align: right;
}
.files td svg {
  width: 16px;
  height: 19px;
  margin-right: 7px;
  vertical-align: -4px;
}
.ex-status {
  display: flex;
  align-items: center;
  height: 31px;
  padding: 0 6px 0 18px;
  color: #33415c;
}
.ex-status span {
  margin-right: auto;
}
.view {
  display: grid;
  place-items: center;
  width: 28px;
  height: 29px;
}
.view.on {
  border: 1px solid #5cb5d8;
  background-color: #cce8f6;
}
.view svg {
  width: 18px;
  height: 18px;
}

/* Guest taskbar */
.taskbar {
  display: flex;
  align-items: center;
  height: 51px;
  background: linear-gradient(90deg, #26353d, #26343e 50%, #1a2640);
  border-bottom: 1px solid #888;
  color: #fff;
}
.taskbar button {
  width: 60px;
  height: 50px;
}
.taskbar button svg {
  width: 21px;
  height: 21px;
  vertical-align: middle;
}
.apps {
  display: flex;
  margin-left: 3px;
}
.taskbar .apps button {
  width: 62px;
}
.taskbar .apps svg {
  width: 28px;
  height: 28px;
}
.taskbar .running {
  background-color: #4e5c65;
  border-bottom: 3px solid #80bbe8;
}
.tray {
  display: flex;
  align-items: center;
  gap: 10px;
  margin-left: auto;
  margin-right: 6px;
  border-right: 1px solid #5a6475;
  height: 50px;
}
.tray > svg {
  width: 19px;
  height: 19px;
}
.clock {
  display: flex;
  flex-direction: column;
  align-items: center;
  font-size: 15px;
  line-height: 23px;
  margin: 0 12px 0 2px;
}
.notes {
  position: relative;
  width: 45px;
}
.notes svg {
  display: block;
  width: 20px;
  height: 20px;
}
.notes span {
  position: absolute;
  left: 10px;
  top: 8px;
  width: 20px;
  height: 20px;
  border: 1px solid #8b929e;
  border-radius: 50%;
  background-color: #2b3648;
  line-height: 18px;
  text-align: center;
}

/* Host status bar */
.statusbar {
  display: flex;
  align-items: center;
  justify-content: space-between;
  height: 20px;
  padding-right: 22px;
  background-color: #f0f0f0;
}
.devices {
  display: flex;
  align-items: center;
  gap: 6px;
}
.devices svg {
  width: 15px;
  height: 15px;
}
.devices .off {
  opacity: 0.5;
}
.devices i {
  width: 1px;
  height: 14px;
  background-color: #999;
}
```
